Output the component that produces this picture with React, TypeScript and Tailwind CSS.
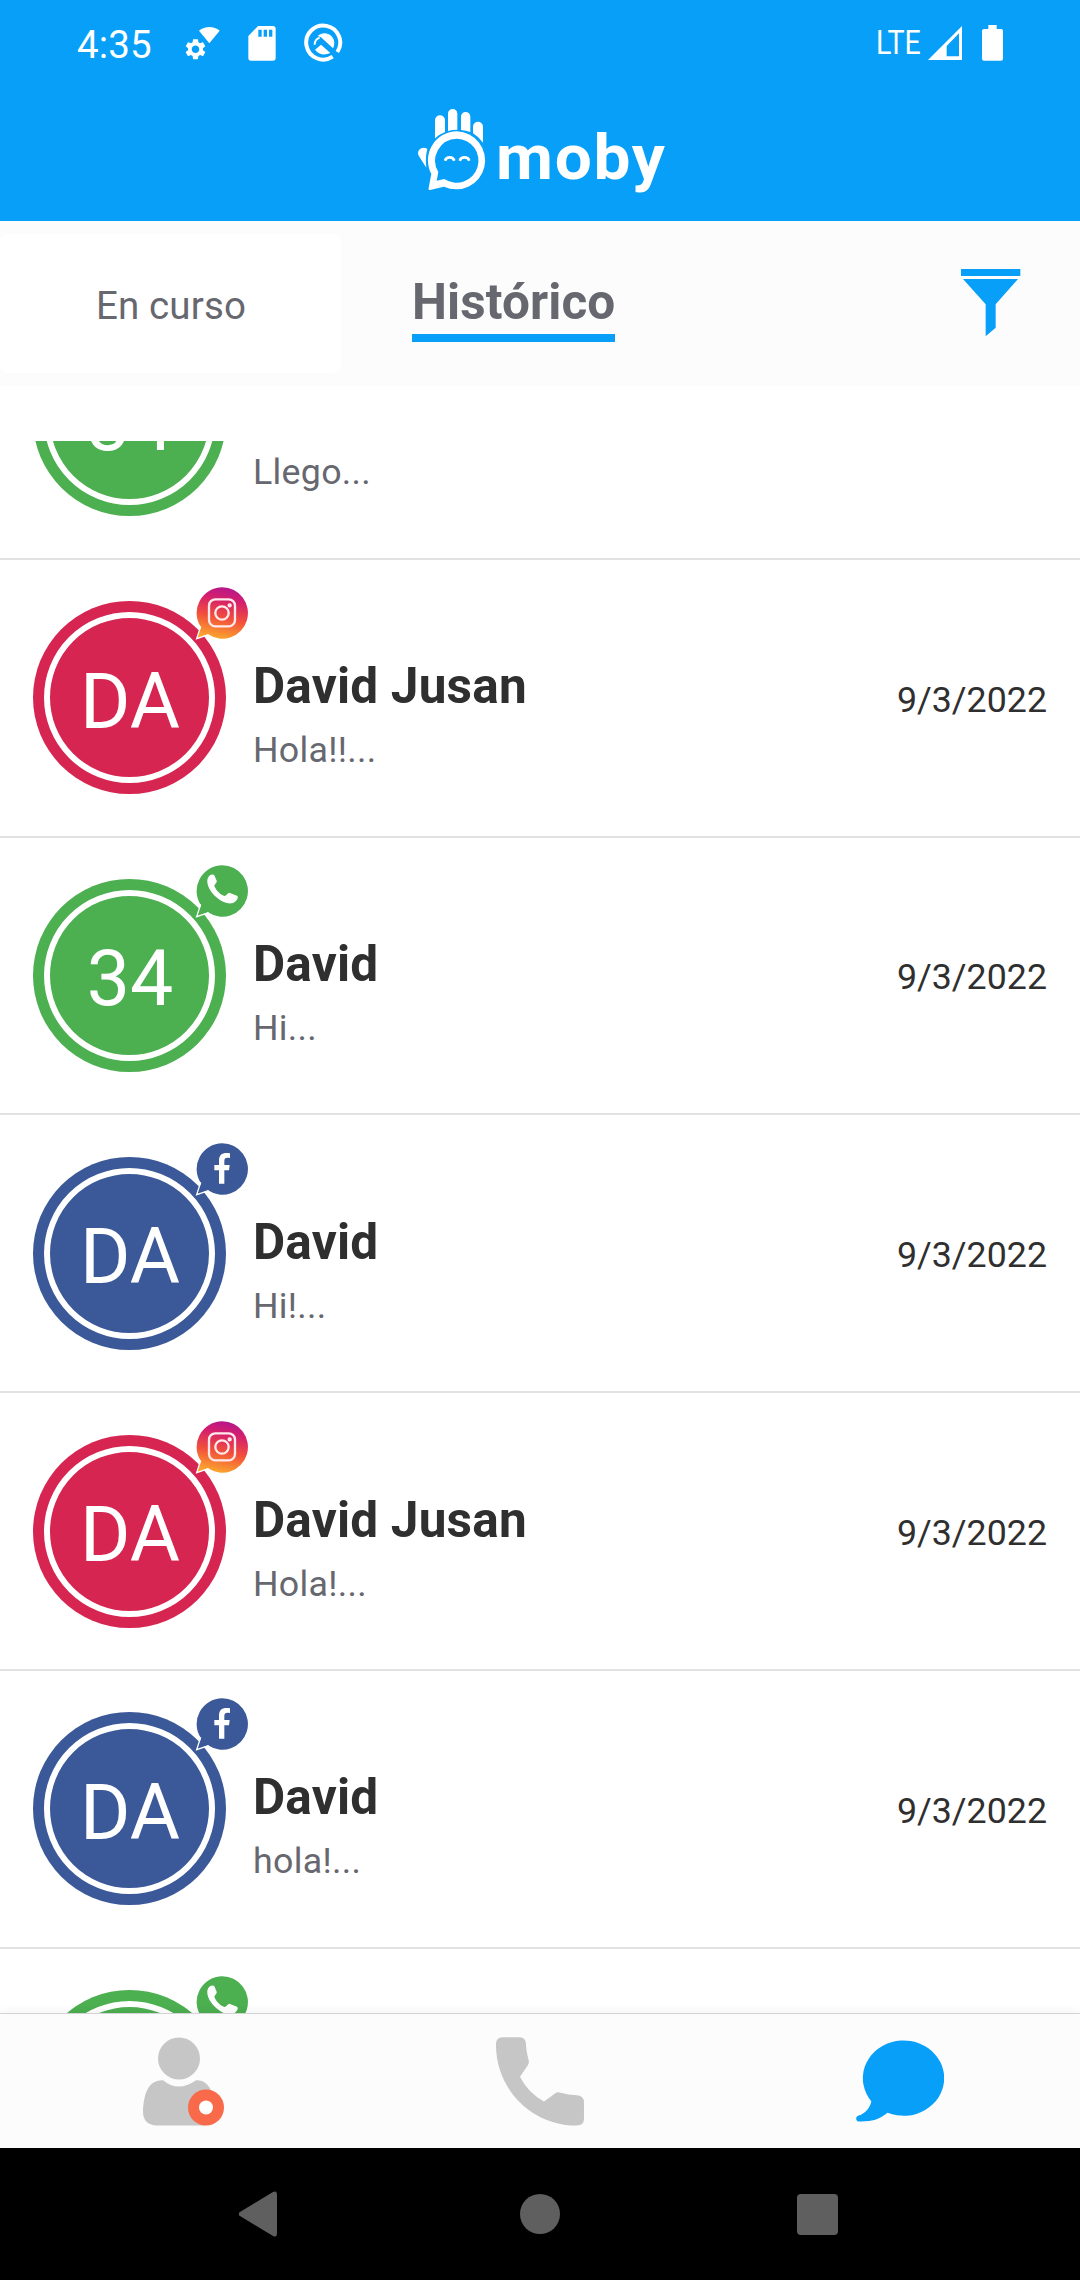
import clsx from 'clsx';
import { FC } from 'react';
import { MdSettings } from 'react-icons/md';

type Channel = 'instagram' | 'whatsapp' | 'facebook';

interface Chat {
    id: number;
    initials: string;
    name: string;
    message: string;
    date: string;
    channel: Channel;
}

const chats: Chat[] = [
    { id: 1, initials: '34', name: '', message: 'Llego...', date: '', channel: 'whatsapp' },
    { id: 2, initials: 'DA', name: 'David Jusan', message: 'Hola!!...', date: '9/3/2022', channel: 'instagram' },
    { id: 3, initials: '34', name: 'David', message: 'Hi...', date: '9/3/2022', channel: 'whatsapp' },
    { id: 4, initials: 'DA', name: 'David', message: 'Hi!...', date: '9/3/2022', channel: 'facebook' },
    { id: 5, initials: 'DA', name: 'David Jusan', message: 'Hola!...', date: '9/3/2022', channel: 'instagram' },
    { id: 6, initials: 'DA', name: 'David', message: 'hola!...', date: '9/3/2022', channel: 'facebook' },
    { id: 7, initials: '', name: '', message: '', date: '', channel: 'whatsapp' },
];

const channelBg: Record<Channel, string> = {
    instagram: 'bg-[#d62550]',
    whatsapp: 'bg-[#4caf50]',
    facebook: 'bg-[#3b5998]',
};

const channelFill: Record<Channel, string> = {
    instagram: 'url(#instagram)',
    whatsapp: '#4caf50',
    facebook: '#3b5998',
};

const StatusBar: FC = () => (
    <div className="flex h-[90px] items-start justify-between pr-[77px] pl-[77px]">
        <div className="flex items-start">
            <span className="w-[106px] pt-[22px] text-[38.5px] leading-[45px] tracking-[.1px]">
                4:35
            </span>
            <svg className="mt-[26px] h-[36px] w-[38px]" viewBox="546 78 114 108" fill="#fff">
                <path d="M594 92C612 77 639 77 656 92L625 130Z" />
                <MdSettings x={546} y={110} size={75} />
            </svg>
            <svg className="mt-[26px] ml-[27px] h-[35px] w-[28px]" viewBox="745 78 84 105" fill="#fff">
                <path
                    fillRule="evenodd"
                    d="M775 78H820Q828 78 828 86V174Q828 182 820 182H754Q746 182 746 174V108ZM776 89V110H786V89ZM792 89V110H802V89ZM808 89V110H818V89Z"
                />
            </svg>
            <svg className="mt-[23px] ml-[28px] h-[40px] w-[40px]" viewBox="911 69 120 120" fill="none">
                <path d="M1011 156A51 51 0 1 0 997 170" stroke="#fff" strokeWidth="12" />
                <path d="M952 108C972 90 1002 104 1002 129Q1002 138 998 145L962 112Z" fill="#fff" />
                <path d="M943 134Q943 118 958 113" stroke="#fff" strokeWidth="6" />
                <path d="M944 149L962 134L990 159Q962 171 944 149Z" fill="#fff" />
                <path d="M958 120L1020 177" stroke="#079ff8" strokeWidth="8" />
            </svg>
        </div>
        <div className="flex items-start">
            <span className="w-[52px] origin-left scale-x-[.84] pt-[22px] text-[34px] leading-[40px]">
                LTE
            </span>
            <svg className="mt-[26px] h-[34px] w-[34px]" viewBox="263 77 102 102" fill="#fff">
                <path fillRule="evenodd" d="M365 77V179H263ZM356 99L319 137V168H356Z" />
            </svg>
            <svg className="mt-[25px] ml-[20px] h-[36px] w-[21px]" viewBox="426 75 63 108" fill="#fff">
                <path d="M445 75H470V87H483Q489 87 489 93V176Q489 182 483 182H432Q426 182 426 176V93Q426 87 432 87H445Z" />
            </svg>
        </div>
    </div>
);

const Logo: FC = () => (
    <svg className="mx-auto h-[120px] w-[280px]" viewBox="0 0 840 360" fill="#fff">
        <path d="M105 145V91A15 15 0 0 1 135 91V126Q118 133 105 145Z" />
        <path d="M144 123V71A14 14 0 0 1 172 71V119Q157 119 144 123Z" />
        <path d="M183 120V80A14 14 0 0 1 211 80V126Q198 121 183 120Z" />
        <path d="M219 130V110A15 15 0 0 1 249 110V158Q236 140 219 130Z" />
        <path d="M79 233L57 199C47 181 67 166 82 177Q75 204 79 233Z" />
        <path
            fillRule="evenodd"
            d="M171 124A87 87 0 1 1 132 290L90 300Q84 300 86 293L94 252A87 87 0 0 1 171 124ZM171 146A66 66 0 0 0 115 246L110 272L133 267A66 66 0 1 0 171 146Z"
        />
        <path
            d="M135 212C140 199 158 199 163 212M179 212C184 199 203 199 208 212"
            fill="none"
            stroke="#fff"
            strokeWidth="8"
        />
        <text
            x="288"
            y="267"
            fontSize="190"
            fontWeight="700"
            letterSpacing="5"
            textLength="512"
            lengthAdjust="spacingAndGlyphs">
            moby
        </text>
    </svg>
);

const Tabs: FC = () => (
    <div className="flex h-[165px] items-start bg-[#fcfcfc] pt-[13px]">
        <div className="flex h-[139px] w-[341px] items-center justify-center rounded-lg bg-white pt-[4px] pl-px text-[38.5px] leading-[45px] tracking-[.15px] text-[#66676f]">
            En curso
        </div>
        <div className="mt-[39px] ml-[71px] border-b-[8px] border-[#079ff8] pb-[3px] text-[49.5px] leading-[58px] font-bold tracking-[.1px] text-[#66676f]">
            Histórico
        </div>
        <svg
            className="mt-[35px] mr-[59px] ml-auto h-[68px] w-[60px]"
            viewBox="123 87 180 204"
            fill="#079ff8">
            <path d="M123 87H301V108H123ZM129 117H294L227 193V263L197 289V193Z" />
        </svg>
    </div>
);

const ChannelGlyph: FC<{ channel: Channel }> = ({ channel }) => {
    if (channel === 'instagram') {
        return (
            <g fill="none" stroke="#ffe9ec" strokeWidth="7">
                <rect x="87" y="87" width="78" height="81" rx="19" />
                <circle cx="126" cy="128" r="20" />
                <circle cx="149" cy="105" r="3" />
            </g>
        );
    }
    if (channel === 'whatsapp') {
        return (
            <path
                d="M82 94C84 81 98 75 103 81L110 97C112 103 103 108 103 113C108 126 121 139 133 143C138 144 143 133 148 133L171 142C177 146 171 158 159 164C145 168 129 163 112 149C92 132 80 112 82 94Z"
                fill="#fff"
            />
        );
    }
    return (
        <path
            d="M117 172V132H103V116H117V102C117 84 129 77 150 81V95C138 93 133 95 133 104V116H149L147 132H133V172Z"
            fill="#fff"
        />
    );
};

const Avatar: FC<{ initials: string; channel: Channel }> = ({ initials, channel }) => (
    <div className="relative size-[193px] shrink-0">
        <div className={clsx('size-full rounded-full p-[11px]', channelBg[channel])}>
            <div className="flex size-full items-center justify-center rounded-full border-[6px] border-white pt-[8px] pl-px text-[77px] leading-[90px] text-white">
                {initials}
            </div>
        </div>
        <svg
            className="absolute -top-[16px] left-[161px] h-[56px] w-[55px]"
            viewBox="42 44 165 168">
            <defs>
                <linearGradient id="instagram" x1="0.6" y1="0" x2="0.4" y2="1">
                    <stop offset="0" stopColor="#b5178c" />
                    <stop offset="0.25" stopColor="#d6206b" />
                    <stop offset="0.6" stopColor="#f2503a" />
                    <stop offset="1" stopColor="#fba72f" />
                </linearGradient>
            </defs>
            <path
                d="M127 51A77 77 0 1 1 84 192L50 205L63 171A77 77 0 0 1 127 51Z"
                fill={channelFill[channel]}
            />
            <path d="M62 168L50 205L86 193" fill="none" stroke="#fff" strokeWidth="4" />
            <ChannelGlyph channel={channel} />
        </svg>
    </div>
);

const ChatRow: FC<{ chat: Chat }> = ({ chat }) => (
    <div className="flex h-[277.8px] shrink-0 items-center border-b-[2.75px] border-[#e2e2e2] px-[33px]">
        <Avatar initials={chat.initials} channel={chat.channel} />
        <div className="flex flex-1 flex-col gap-[14px] pt-[33px] pl-[27px]">
            <span className="h-[58px] text-[49.5px] leading-[58px] font-bold tracking-[.2px] text-[#2f2f30]">
                {chat.name}
            </span>
            <span className="h-[42px] text-[35.75px] leading-[42px] tracking-[.3px] text-[#66676f]">
                {chat.message}
            </span>
        </div>
        <span className="pt-[4px] text-[35.75px] leading-[42px] text-[#2f2f30]">{chat.date}</span>
    </div>
);

const BottomNav: FC = () => (
    <div className="grid h-[135px] grid-cols-3 items-center justify-items-center border-t border-[#d3d3d5] bg-[#fcfcfc] shadow-[0_-2px_10px_rgba(0,0,0,0.05)]">
        <svg className="h-[89px] w-[88px]" viewBox="108 290 264 266">
            <circle cx="237" cy="354" r="63" fill="#c6c6c6" />
            <path
                d="M189 419Q235 457 288 419C325 417 345 455 345 515Q345 555 305 555H170Q129 553 129 513C131 460 145 417 189 419Z"
                fill="#c6c6c6"
            />
            <circle cx="318" cy="501" r="54" fill="#f96a4b" />
            <circle cx="318" cy="501" r="21" fill="#fff" />
        </svg>
        <svg className="h-[89px] w-[88px]" viewBox="108 110 264 266" fill="#c6c6c6">
            <path d="M128 110H179Q197 110 198 130Q198 150 206 179Q208 187 203 195L180 229Q203 276 252 303L285 279Q292 273 302 277Q325 284 350 284Q372 285 372 306V354Q372 375 350 375C215 376 106 265 108 130Q108 110 128 110Z" />
        </svg>
        <svg className="h-[89px] w-[88px]" viewBox="1188 110 264 266" fill="#079ff8">
            <path d="M1234 302A122 113 0 1 1 1283 337C1255 359 1232 364 1196 363C1187 362 1186 350 1194 346C1216 339 1230 322 1234 302Z" />
        </svg>
    </div>
);

const SystemNav: FC = () => (
    <div className="flex h-[132px] items-center justify-center gap-[237px] bg-black pr-[3px]">
        <svg className="h-[46px] w-[44px]" viewBox="0 0 44 46" fill="#5f5f5f">
            <path d="M1 21L34 1Q38 -1 38 4V42Q38 47 34 45L1 25Q-2 23 1 21Z" />
        </svg>
        <div className="size-[40px] rounded-full bg-[#5f5f5f]" />
        <div className="size-[41px] rounded-[4px] bg-[#5f5f5f]" />
    </div>
);

export default function App() {
    return (
        <div className="flex h-[2280px] w-[1080px] flex-col overflow-hidden bg-white font-['Roboto',sans-serif]">
            <header className="h-[221px] shrink-0 bg-[#079ff8] text-white">
                <StatusBar />
                <Logo />
            </header>
            <Tabs />
            {/* the list is scrolled: first and last rows are cut */}
            <main className="mt-[55px] flex h-[1572px] shrink-0 flex-col overflow-hidden">
                <div className="-mt-[159px] flex flex-col">
                    {chats.map((chat) => (
                        <ChatRow key={chat.id} chat={chat} />
                    ))}
                </div>
            </main>
            <div className="relative">
                <BottomNav />
            </div>
            <SystemNav />
        </div>
    );
}
